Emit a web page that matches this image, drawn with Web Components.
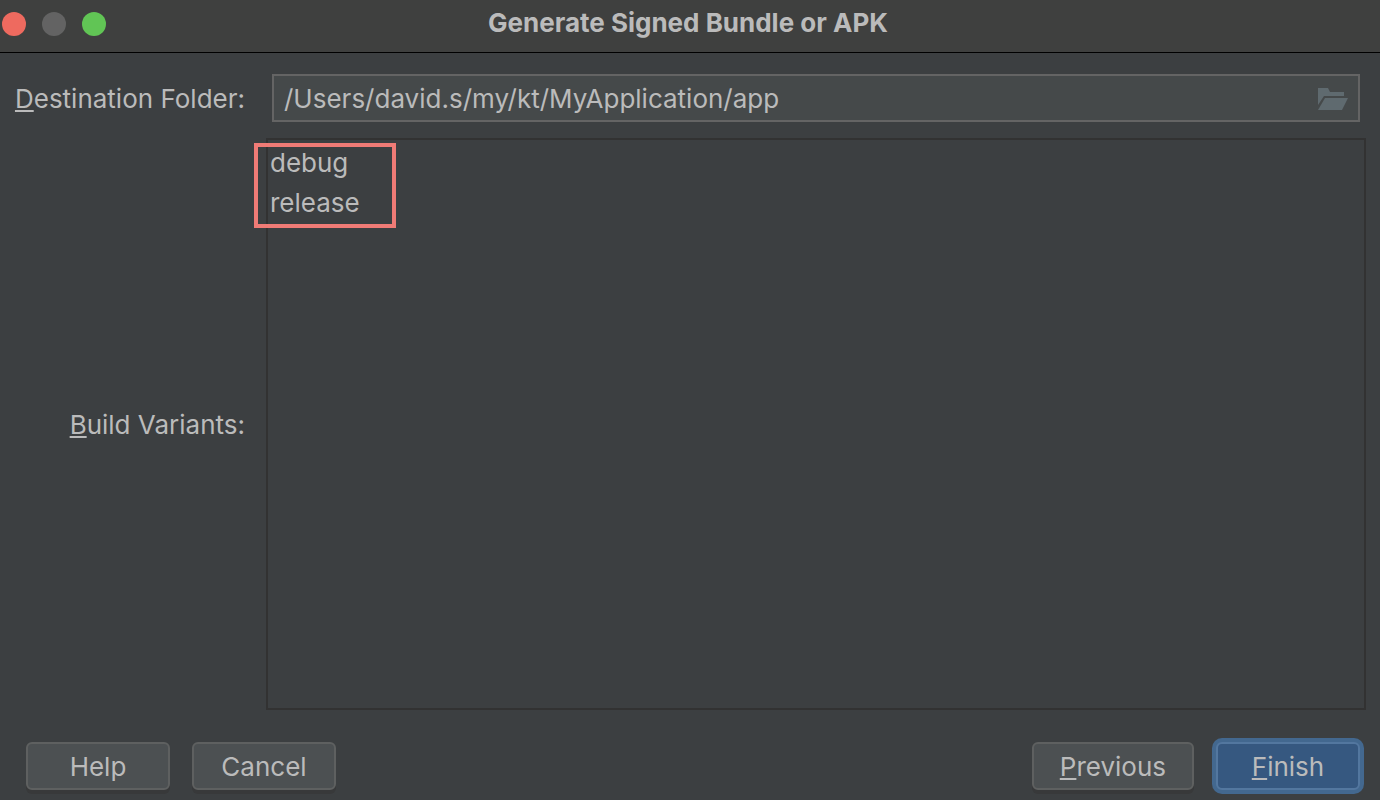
<!DOCTYPE html>
<html lang="en">
<head>
<meta charset="utf-8">
<title>Generate Signed Bundle or APK</title>
<style>
  body { margin: 0; background: #3c3f41; color: #bbbbbb; font: 26px/32px Inter, "Liberation Sans", sans-serif; }
</style>
</head>
<body>
<bundle-dialog></bundle-dialog>

<template id="title-bar">
  <style>
    :host { display: grid; grid-template-columns: 1fr auto 1fr; align-items: center; height: 48px; padding: 0 6px 4px 2px; background: #3f403f; border-bottom: 1px solid #000; box-sizing: content-box; }
    div { display: flex; gap: 16px; }
    button { width: 24px; height: 24px; padding: 0; border: 0; border-radius: 50%; background: #636363; }
    .close { background: #ee6a5f; }
    .zoom { background: #61c555; }
    h1 { margin: 0; padding-bottom: 2px; font-size: 26px; line-height: 32px; font-weight: 700; white-space: nowrap; }
  </style>
  <div>
    <button class="close" type="button" aria-label="Close"></button>
    <button type="button" aria-label="Minimize" disabled></button>
    <button class="zoom" type="button" aria-label="Zoom"></button>
  </div>
  <h1><slot></slot></h1>
</template>

<template id="folder-field">
  <style>
    :host { display: grid; grid-template-columns: 245px 1fr; column-gap: 27px; align-items: center; padding-right: 6px; }
    label { padding-top: 2px; text-align: right; white-space: nowrap; }
    u { text-decoration: underline 2px; text-underline-offset: 2px; text-decoration-skip-ink: none; }
    .box { display: flex; align-items: center; height: 44px; border: 2px solid #646464; background: #45494a; }
    input { flex: 1; min-width: 0; height: 44px; padding: 0 10px; border: 0; outline: 0; background: none; color: inherit; font: inherit; box-sizing: border-box; }
    button { display: flex; padding: 2px 0 0; margin-right: 10px; border: 0; background: none; }
  </style>
  <label for="path"><u>D</u>estination Folder:</label>
  <div class="box">
    <input id="path" type="text" spellcheck="false">
    <button type="button" aria-label="Browse">
      <svg width="32" height="32" viewBox="0 0 32 32" fill="#5f6a6f" aria-hidden="true">
        <path d="M2 5H12L14 9H28V13H8L2 22Z"/>
        <path d="M9 15H32L26 27H2Z"/>
      </svg>
    </button>
  </div>
</template>

<template id="variant-list">
  <style>
    :host { display: grid; grid-template-columns: 245px 1fr; column-gap: 21px; align-items: center; }
    label { padding-top: 2px; text-align: right; white-space: nowrap; }
    u { text-decoration: underline 2px; text-underline-offset: 2px; text-decoration-skip-ink: none; }
    .box { position: relative; align-self: stretch; display: flex; }
    select { flex: 1; padding: 3px 0; border: 2px solid #323232; border-radius: 0; outline: 0; background: #3c3f41; color: inherit; font: inherit; overflow: hidden; }
    option { min-height: 40px; padding: 4px 2px; box-sizing: border-box; color: #bbbbbb; }
    .mark { position: absolute; left: -12px; top: 5px; width: 142px; height: 85px; border: 4px solid #f07b76; box-sizing: border-box; pointer-events: none; }
  </style>
  <label for="variants"><u>B</u>uild Variants:</label>
  <div class="box">
    <select id="variants" multiple size="2">
      <option>debug</option>
      <option>release</option>
    </select>
    <div class="mark"></div>
  </div>
</template>

<template id="dialog-button">
  <style>
    :host { display: inline-flex; }
    button { min-width: 144px; height: 48px; padding: 2px 26px 0; border: 2px solid #5e6060; border-radius: 6px; background: #4c5052; color: inherit; font: inherit; box-shadow: 0 4px 0 #38393a; box-sizing: border-box; }
    :host([primary]) button { border-color: #53779f; background: #365880; box-shadow: 0 0 0 4px #43688f; }
    ::slotted(u) { text-decoration: underline 2px; text-underline-offset: 2px; text-decoration-skip-ink: none; }
  </style>
  <button type="button"><slot></slot></button>
</template>

<template id="bundle-dialog">
  <style>
    :host { display: flex; flex-direction: column; min-height: 100vh; }
    main { flex: 1; display: flex; flex-direction: column; gap: 16px; padding: 21px 14px 0 0; }
    variant-list { flex: 1; }
    footer { display: flex; gap: 22px; padding: 32px 20px 10px 26px; }
    .next { margin-left: auto; }
  </style>
  <title-bar>Generate Signed Bundle or APK</title-bar>
  <main>
    <folder-field value="/Users/david.s/my/kt/MyApplication/app"></folder-field>
    <variant-list></variant-list>
  </main>
  <footer>
    <dialog-button>Help</dialog-button>
    <dialog-button>Cancel</dialog-button>
    <dialog-button class="next"><u>P</u>revious</dialog-button>
    <dialog-button primary><u>F</u>inish</dialog-button>
  </footer>
</template>

<script>
  class TemplateElement extends HTMLElement {
    constructor() {
      super();
      const template = document.getElementById(this.localName);
      this.attachShadow({ mode: "open" }).append(template.content.cloneNode(true));
    }
  }
  class TitleBar extends TemplateElement {}
  class FolderField extends TemplateElement {
    connectedCallback() {
      this.shadowRoot.querySelector("input").value = this.getAttribute("value") || "";
    }
  }
  class VariantList extends TemplateElement {}
  class DialogButton extends TemplateElement {}
  class BundleDialog extends TemplateElement {}

  customElements.define("title-bar", TitleBar);
  customElements.define("folder-field", FolderField);
  customElements.define("variant-list", VariantList);
  customElements.define("dialog-button", DialogButton);
  customElements.define("bundle-dialog", BundleDialog);
</script>
</body>
</html>
